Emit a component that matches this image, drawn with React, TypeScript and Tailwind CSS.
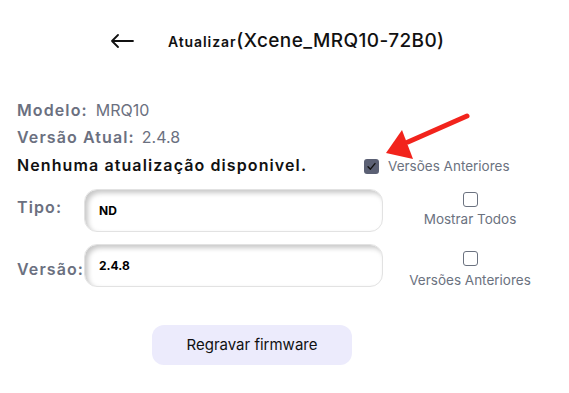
import React from "react";

function Box({ checked = false }: { checked?: boolean }) {
  if (checked) {
    return (
      <span className="flex h-[15px] w-[15px] items-center justify-center rounded-[3px] bg-[#5b6074]">
        <svg width="11" height="11" viewBox="0 0 12 12" fill="none">
          <path d="M2.2 6.3 L4.8 8.9 L9.8 2.8" stroke="#111" strokeWidth="1.5" strokeLinecap="round" strokeLinejoin="round" />
        </svg>
      </span>
    );
  }
  return <span className="block h-[15px] w-[15px] rounded-[3px] border border-[#6b7280] bg-white" />;
}

function Field({ value }: { value: string }) {
  return (
    <div className="flex h-[43px] w-[299px] items-center rounded-[13px] border border-[#e2e2e2] bg-white pl-[14px] text-[12px] font-bold text-black shadow-[inset_3px_3px_5px_rgba(0,0,0,0.22)]">
      {value}
    </div>
  );
}

export default function App() {
  return (
    <div className="relative h-[393px] w-[569px] overflow-hidden bg-white font-['Inter',sans-serif] text-[#111]">
      {/* header */}
      <div className="flex h-[82px] items-center pl-[110px]">
        <svg width="24" height="14" viewBox="0 0 24 14" fill="none" className="mr-[34px]">
          <path d="M23 7 H2 M8 1 L2 7 L8 13" stroke="#111" strokeWidth="1.8" strokeLinecap="round" strokeLinejoin="round" />
        </svg>
        <span className="text-[14px] font-semibold tracking-[0.9px]">Atualizar</span>
        <span className="text-[19px] font-medium tracking-[0.4px]">(Xcene_MRQ10-72B0)</span>
      </div>

      <div className="pl-[17px] pt-[15px]">
        <div className="text-[16px] leading-[27px] text-[#6b7080]">
          <span className="font-semibold tracking-[1.1px]">Modelo:</span>
          <span className="ml-[8px]">MRQ10</span>
        </div>
        <div className="text-[16px] leading-[27px] text-[#6b7080]">
          <span className="font-semibold tracking-[1.1px]">Versão Atual:</span>
          <span className="ml-[7px]">2.4.8</span>
        </div>
        <div className="flex items-center text-[16px] leading-[27px]">
          <span className="w-[347px] font-semibold tracking-[1.1px] text-[#111]">Nenhuma atualização disponivel.</span>
          <label className="flex items-center gap-[9px] pt-[2px] text-[13.5px] text-[#6b7280]">
            <Box checked />
            <span>Versões Anteriores</span>
          </label>
        </div>

        <div className="mt-[9px] grid grid-cols-[67px_299px_174px] gap-y-[12px]">
          <div className="pt-[8px] text-[16px] leading-[20px] font-semibold tracking-[1.1px] text-[#6b7080]">Tipo:</div>
          <Field value="ND" />
          <div className="flex flex-col items-center pt-[3px]">
            <Box />
            <span className="mt-[2px] text-[13.5px] text-[#6b7280]">Mostrar Todos</span>
          </div>

          <div className="pt-[15px] text-[16px] leading-[20px] font-semibold tracking-[1.1px] text-[#6b7080]">Versão:</div>
          <Field value="2.4.8" />
          <div className="flex flex-col items-center pt-[7px]">
            <Box />
            <span className="mt-[4px] text-[13.5px] text-[#6b7280]">Versões Anteriores</span>
          </div>
        </div>
      </div>

      <div className="mt-[35px] flex pl-[152px]">
        <button className="h-[40px] w-[200px] rounded-[12px] bg-[#ecebfc] text-[15px] text-[#111]">
          Regravar firmware
        </button>
      </div>

      {/* red annotation arrow */}
      <svg className="absolute left-[380px] top-[110px]" width="95" height="50" viewBox="0 0 95 50" fill="none">
        <path d="M87 6 L28 32" stroke="#f2231c" strokeWidth="5" strokeLinecap="round" />
        <path d="M6 43 L22 20 L33 49 Z" fill="#f2231c" />
      </svg>
    </div>
  );
}
